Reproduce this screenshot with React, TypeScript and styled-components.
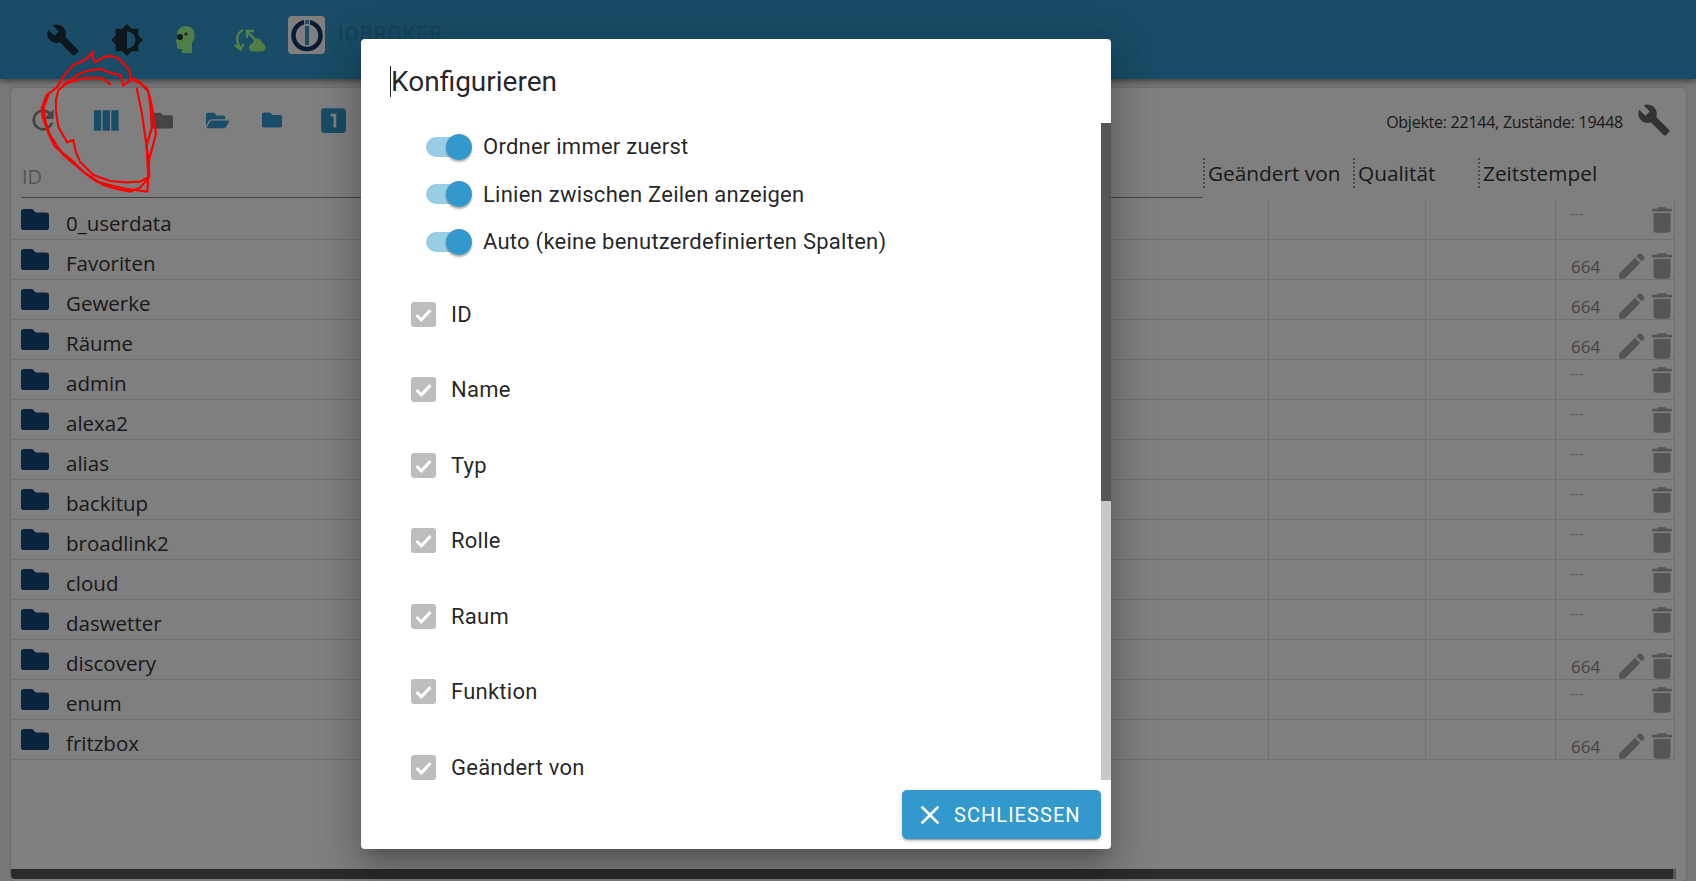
import React from 'react';
import styled, { createGlobalStyle } from 'styled-components';

const GlobalStyle = createGlobalStyle`
  html, body { margin: 0; height: 100%; overflow: hidden; background: #f0f0f0; }
  #root { height: 100%; }
  * { box-sizing: border-box; }
`;

const Page = styled.div`
  position: relative;
  height: 881px;
  display: flex;
  flex-direction: column;
  font-family: 'Open Sans', 'Noto Sans', sans-serif;
`;

const TopBar = styled.header`
  flex: 0 0 79px;
  background: #3399cc;
  box-shadow: 0 2px 6px rgba(0, 0, 0, 0.5);
  display: flex;
  align-items: flex-start;
  padding: 16px 0 0 46px;
  position: relative;
`;

const TopIcon = styled.svg<{ $gap: number }>`
  width: 34px;
  height: 34px;
  margin: 7px ${p => p.$gap}px 0 0;
`;

const LogoBox = styled.div`
  width: 37px;
  height: 38px;
  border-radius: 4px;
  background: #fff;
  margin-right: 13px;
  display: flex;
  align-items: center;
  justify-content: center;
`;

const BrandName = styled.span`
  font-family: Roboto, sans-serif;
  font-size: 20px;
  letter-spacing: 1.4px;
  color: #2e80b0;
  margin-top: 6px;
`;

const Panel = styled.main`
  flex: 1;
  margin: 9px 10px 0 11px;
  background: #ffffff;
  box-shadow: 0 0 2px rgba(0, 0, 0, 0.35);
  border-radius: 4px;
  display: flex;
  flex-direction: column;
  min-height: 0;
`;

const ToolRow = styled.div`
  flex: 0 0 62px;
  display: flex;
  align-items: center;
  padding: 2px 15px 0 16px;
`;

const ToolIcon = styled.svg<{ $size: number; $gap: number; $color: string }>`
  width: ${p => p.$size}px;
  height: ${p => p.$size}px;
  margin-right: ${p => p.$gap}px;
  fill: ${p => p.$color};
`;

const Stats = styled.span`
  margin: 4px 0 0 auto;
  font-size: 16px;
  letter-spacing: -0.25px;
  color: #333;
`;

const ToolWrench = styled.svg`
  width: 34px;
  height: 34px;
  margin-left: 14px;
  fill: #666;
`;

const ColumnHeads = styled.div`
  flex: 0 0 50px;
  display: flex;
  align-items: flex-start;
  padding-left: 10px;
`;

const IdHead = styled.div`
  width: 1182px;
  height: 48px;
  padding: 13px 0 0 1px;
  border-bottom: 1px solid #888;
  font-size: 20px;
  color: #aaa;
`;

const ColHead = styled.div<{ $w: number }>`
  width: ${p => p.$w}px;
  height: 30px;
  margin-top: 8px;
  border-left: 2px dotted #999;
  padding-left: 3px;
  font-size: 20.8px;
  line-height: 30px;
  color: #333;
  white-space: nowrap;
`;

const Rows = styled.div`
  flex: 1;
  min-height: 0;
`;

const Row = styled.div`
  height: 40px;
  display: grid;
  grid-template-columns: 1257px 157px 130px 120px;
  width: 1664px;
  border-bottom: 1px solid #e0e0e0;
`;

const NameCell = styled.div`
  display: flex;
  padding: 7px 0 0 10px;
  font-size: 20.5px;
  line-height: 32px;
  color: #333;
`;

const FolderIcon = styled.svg`
  width: 28px;
  height: 21px;
  margin: 2px 17px 0 0;
  fill: #144880;
`;

const Cell = styled.div`
  border-left: 1px solid #e0e0e0;
`;

const ActionCell = styled.div`
  border-left: 1px solid #e0e0e0;
  border-right: 1px solid #e0e0e0;
  position: relative;
  display: flex;
`;

const Dashes = styled.span`
  font-size: 14px;
  line-height: 18px;
  color: #bbb;
  margin: 5px 0 0 14px;
`;

const Perm = styled.span`
  font-size: 17px;
  line-height: 24px;
  color: #888;
  margin: 15px 0 0 15px;
`;

const RowIcon = styled.svg<{ $top: number; $left: number }>`
  width: 34px;
  height: 34px;
  fill: #aaa;
  position: absolute;
  top: ${p => p.$top}px;
  left: ${p => p.$left}px;
`;

const BottomScroll = styled.div`
  flex: 0 0 10px;
  margin-bottom: 2px;
  border-radius: 0 0 0 4px;
  background: #555;
  border-right: 3px solid #aaa;
  margin-right: 10px;
`;

const Scribble = styled.svg`
  position: absolute;
  left: 30px;
  top: 45px;
  width: 140px;
  height: 155px;
  z-index: 5;
  fill: none;
  stroke: #fd0000;
  stroke-width: 6.5;
  stroke-linejoin: round;
  stroke-linecap: round;
`;

const Backdrop = styled.div`
  position: absolute;
  inset: 0;
  background: rgba(0, 0, 0, 0.5);
  z-index: 2;
`;

const Dialog = styled.section`
  position: absolute;
  left: 361px;
  top: 39px;
  width: 750px;
  height: 810px;
  background: #fff;
  border-radius: 4px;
  box-shadow: 0 11px 15px -7px rgba(0, 0, 0, 0.2), 0 24px 38px 3px rgba(0, 0, 0, 0.14), 0 9px 46px 8px rgba(0, 0, 0, 0.12);
  z-index: 3;
  display: flex;
  flex-direction: column;
  font-family: Roboto, sans-serif;
  color: rgba(0, 0, 0, 0.87);
`;

const DialogTitle = styled.h2`
  flex: 0 0 84px;
  margin: 0;
  padding: 23px 0 0 30px;
  font-size: 28px;
  line-height: 40px;
  font-weight: 400;
`;

const Caret = styled.span`
  display: inline-block;
  width: 1px;
  height: 31px;
  background: #222;
  vertical-align: -6px;
  margin-left: -1px;
`;

const DialogBody = styled.div`
  flex: 1;
  min-height: 0;
  padding: 0 0 0 50px;
`;

const ScrollTrack = styled.div`
  position: absolute;
  right: 0;
  top: 84px;
  bottom: 69px;
  width: 10px;
  background: #c8c8c8;
`;

const ScrollThumb = styled.div`
  height: 378px;
  background: #555;
`;

const ToggleRow = styled.label`
  height: 47.5px;
  display: flex;
  align-items: center;
  padding-left: 15px;
  font-size: 22px;
  letter-spacing: 0.25px;
`;

const ToggleTrack = styled.span`
  width: 44px;
  height: 20px;
  border-radius: 10px;
  background: #99cce5;
  position: relative;
  margin-right: 13px;
`;

const ToggleKnob = styled.span`
  position: absolute;
  right: -2px;
  top: -3px;
  width: 26px;
  height: 26px;
  border-radius: 50%;
  background: #3399cc;
  box-shadow: 0 2px 2px rgba(0, 0, 0, 0.3);
`;

const Toggles = styled.div`
  margin-bottom: 11px;
`;

const CheckRow = styled.label`
  height: 75.5px;
  display: flex;
  align-items: center;
  font-size: 22px;
  letter-spacing: 0.25px;
`;

const CheckBox = styled.span`
  width: 25px;
  height: 25px;
  border-radius: 3px;
  background: #bdbdbd;
  margin-right: 15px;
  display: flex;
  align-items: center;
  justify-content: center;
`;

const CloseButton = styled.button`
  position: absolute;
  right: 10px;
  bottom: 10px;
  width: 199px;
  height: 49px;
  border: 0;
  border-radius: 5px;
  background: #3399cc;
  color: #fff;
  font-family: Roboto, sans-serif;
  font-size: 20px;
  letter-spacing: 1.05px;
  display: flex;
  align-items: center;
  gap: 8px;
  padding: 0 0 0 12px;
  box-shadow: 0 3px 1px -2px rgba(0, 0, 0, 0.2), 0 2px 2px rgba(0, 0, 0, 0.14), 0 1px 5px rgba(0, 0, 0, 0.12);
`;

const FooterSpace = styled.div`
  flex: 0 0 69px;
`;

const wrench = 'M22.7 19l-9.1-9.1c.9-2.3.4-5-1.5-6.9-2-2-5-2.4-7.4-1.3L9 6 6 9 1.6 4.7C.4 7.1.9 10.1 2.9 12.1c1.9 1.9 4.6 2.4 6.9 1.5l9.1 9.1c.4.4 1 .4 1.4 0l2.3-2.3c.5-.4.5-1.1.1-1.4z';
const folder = 'M464 128H272l-64-64H48C21.49 64 0 85.49 0 112v288c0 26.51 21.49 48 48 48h416c26.51 0 48-21.49 48-48V176c0-26.51-21.49-48-48-48z';
const folderOpen = 'M572.694 292.093L500.27 416.248A63.997 63.997 0 0 1 444.989 448H45.025c-18.523 0-30.064-20.093-20.731-36.093l72.424-124.155A64 64 0 0 1 152 256h399.964c18.523 0 30.064 20.093 20.73 36.093zM152 224h328v-48c0-26.51-21.49-48-48-48H272l-64-64H48C21.49 64 0 85.49 0 112v278.046l69.077-118.418C86.214 242.25 117.989 224 152 224z';
const pencil = 'M3 17.25V21h3.75L17.81 9.94l-3.75-3.75L3 17.25zM20.71 7.04c.39-.39.39-1.02 0-1.41l-2.34-2.34c-.39-.39-1.02-.39-1.41 0l-1.83 1.83 3.75 3.75 1.83-1.83z';
const trash = 'M6 19c0 1.1.9 2 2 2h8c1.1 0 2-.9 2-2V7H6v12zM19 4h-3.5l-1-1h-5l-1 1H5v2h14V4z';

const rows: [string, boolean][] = [
  ['0_userdata', false], ['Favoriten', true], ['Gewerke', true], ['Räume', true], ['admin', false],
  ['alexa2', false], ['alias', false], ['backitup', false], ['broadlink2', false], ['cloud', false],
  ['daswetter', false], ['discovery', true], ['enum', false], ['fritzbox', true],
];

const columns = ['ID', 'Name', 'Typ', 'Rolle', 'Raum', 'Funktion', 'Geändert von'];

export default function App() {
  return (
    <Page>
      <GlobalStyle />
      <TopBar>
        <TopIcon $gap={30} viewBox="0 0 24 24" fill="#1a2f3c"><path d={wrench} /></TopIcon>
        <TopIcon $gap={24} viewBox="0 0 24 24" fill="#1a2f3c">
          <path d="M20 8.69V4h-4.69L12 .69 8.69 4H4v4.69L.69 12 4 15.31V20h4.69L12 23.31 15.31 20H20v-4.69L23.31 12 20 8.69zM12 18V6c3.31 0 6 2.69 6 6s-2.69 6-6 6z" />
        </TopIcon>
        <TopIcon $gap={30} viewBox="-7 -3 34 34">
          <path fill="#9eff8e" d="M11 0C16 0 19.500 3.500 19.500 9C19.500 13 18 15 17 17L17 27L7 27L7 23L4 23C2.500 23 2 22 2 20.500L2 17L0.500 16L2 12.500L2 9C2 3.500 6 0 11 0Z" />
          <circle cx="5" cy="11" r="3" fill="#1a2f3c" />
          <path d="M11 6v4M9 8h4" stroke="#1a2f3c" strokeWidth="1" />
        </TopIcon>
        <TopIcon $gap={22} viewBox="0 0 34 34">
          <g fill="none" stroke="#9eff8e" strokeWidth="2.500">
            <path d="M11 7C5 10 3 17 8 24" />
            <path d="M3 22L8.500 26.500L11.500 21" />
            <path d="M24 18L16 9" />
            <path d="M15 15V8H22" />
          </g>
          <path fill="#9eff8e" d="M25 15.500C28 15.500 30 18 30 20C32.500 20.500 33.500 22.500 33.500 24.500C33.500 27 31.500 28.500 29 28.500H21C18 28.500 17 26.500 17 24.500C17 22.500 18.500 21 20.500 20.500C21 17.500 23 15.500 25 15.500Z" />
        </TopIcon>
        <LogoBox>
          <svg width="34" height="34" viewBox="0 0 34 34" fill="none">
            <circle cx="17" cy="17.500" r="13.500" stroke="#13386b" strokeWidth="4.500" />
            <rect x="14" y="1" width="6" height="6" fill="#fff" />
            <rect x="15" y="2" width="4" height="4" fill="#3399cc" />
            <rect x="15" y="8" width="4" height="19" fill="#3399cc" />
          </svg>
        </LogoBox>
        <BrandName>IOBROKER</BrandName>
      </TopBar>
      <Panel>
        <ToolRow>
          <ToolIcon $size={32} $gap={28.5} $color="#888" viewBox="0 0 24 24"><path d="M17.650 6.350A7.960 7.960 0 0 0 12 4a8 8 0 1 0 7.730 10h-2.080A6 6 0 1 1 12 6c1.660 0 3.140.69 4.220 1.780L13 11h7V4l-2.350 2.350z" /></ToolIcon>
          <ToolIcon $size={35} $gap={29} $color="#3399cc" viewBox="0 0 24 24"><path d="M10 19h5V5h-5v14zm-6 0h5V5H4v14zM16 5v14h5V5h-5z" /></ToolIcon>
          <ToolIcon $size={21} $gap={33} $color="#888" viewBox="0 0 512 512"><path d={folder} /></ToolIcon>
          <ToolIcon $size={23} $gap={33} $color="#3399cc" viewBox="0 0 576 512"><path d={folderOpen} /></ToolIcon>
          <ToolIcon $size={20} $gap={35} $color="#3399cc" viewBox="0 0 512 512"><path d={folder} /></ToolIcon>
          <ToolIcon $size={33} $gap={0} $color="#3399cc" viewBox="0 0 24 24"><path d="M19 3H5c-1.100 0-2 .9-2 2v14c0 1.100.9 2 2 2h14c1.100 0 2-.9 2-2V5c0-1.100-.9-2-2-2zm-5 14h-2V9h-2V7h4v10z" /></ToolIcon>
          <Stats>Objekte: 22144, Zustände: 19448</Stats>
          <ToolWrench viewBox="0 0 24 24"><path d={wrench} /></ToolWrench>
        </ToolRow>
        <ColumnHeads>
          <IdHead>ID</IdHead>
          <ColHead $w={150}>Geändert von</ColHead>
          <ColHead $w={125}>Qualität</ColHead>
          <ColHead $w={150}>Zeitstempel</ColHead>
        </ColumnHeads>
        <Rows>
          {rows.map(([name, writable]) => (
            <Row key={name}>
              <NameCell>
                <FolderIcon viewBox="0 64 512 384"><path d={folder} /></FolderIcon>
                {name}
              </NameCell>
              <Cell />
              <Cell />
              <ActionCell>
                {writable ? <Perm>664</Perm> : <Dashes>---</Dashes>}
                {writable && <RowIcon $top={9} $left={59} viewBox="0 0 24 24"><path d={pencil} /></RowIcon>}
                <RowIcon $top={writable ? 9 : 3} $left={89} viewBox="0 0 24 24"><path d={trash} /></RowIcon>
              </ActionCell>
            </Row>
          ))}
        </Rows>
        <BottomScroll />
      </Panel>
      <Backdrop />
      <Dialog>
        <DialogTitle><Caret />Konfigurieren</DialogTitle>
        <DialogBody>
          <Toggles>
            {['Ordner immer zuerst', 'Linien zwischen Zeilen anzeigen', 'Auto (keine benutzerdefinierten Spalten)'].map(label => (
              <ToggleRow key={label}>
                <ToggleTrack><ToggleKnob /></ToggleTrack>
                {label}
              </ToggleRow>
            ))}
          </Toggles>
          {columns.map(col => (
            <CheckRow key={col}>
              <CheckBox>
                <svg width="21" height="21" viewBox="0 0 24 24" fill="none" stroke="#fff" strokeWidth="3.400"><path d="M4 12.500l5.500 5.500L20 7" /></svg>
              </CheckBox>
              {col}
            </CheckRow>
          ))}
        </DialogBody>
        <FooterSpace />
        <ScrollTrack><ScrollThumb /></ScrollTrack>
        <CloseButton>
          <svg width="32" height="32" viewBox="0 0 24 24" fill="#fff"><path d="M19 6.410 17.590 5 12 10.590 6.410 5 5 6.410 10.590 12 5 17.590 6.410 19 12 13.410 17.590 19 19 17.590 13.410 12z" /></svg>
          SCHLIESSEN
        </CloseButton>
      </Dialog>
      <Scribble viewBox="0 0 420 465">
        <polyline points="190,20 187,35 195,52 218,38 240,32 265,40 285,60 298,75 302,100 330,115 350,128 358,150 365,180 372,225 378,265 368,305 358,340 355,395 352,440 315,435 280,430 240,420 200,410 165,385 130,350 100,325 75,305 60,275 50,250 38,215 35,190 50,150 80,128 100,95 130,60 165,45 190,20" />
        <polyline points="240,118 225,105 215,100 190,98 160,100 110,115 85,135 78,165 78,200 85,245 100,272 112,292 130,285 137,320 150,350 190,390 240,408 290,412 330,410 358,395 355,340 345,270 335,200 320,130" />
        <polyline points="55,150 40,190 48,235 60,270 100,330 130,355 160,380 190,400 220,420 260,432 300,440 330,428 355,400 350,300 365,250 362,190 355,140 330,112 310,100 280,122 272,90 245,85 210,72 180,76 150,85 100,120" />
      </Scribble>
    </Page>
  );
}
